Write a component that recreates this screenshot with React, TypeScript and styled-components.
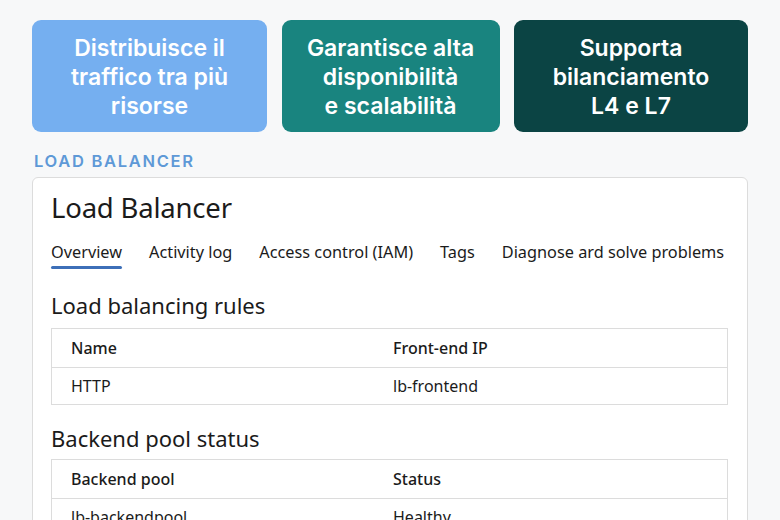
import React from "react";
import styled, { createGlobalStyle } from "styled-components";

const Global = createGlobalStyle`
  html, body { margin: 0; padding: 0; background: #f7f8f9; }
  body { font-family: "Noto Sans", "Open Sans", sans-serif; }
`;

const Page = styled.div`
  width: 780px;
  height: 520px;
  overflow: hidden;
  box-sizing: border-box;
  padding: 20px 32px 0 32px;
`;

const Cards = styled.div`
  display: grid;
  grid-template-columns: 235px 218px 234px;
  column-gap: 14.5px;
`;

const Card = styled.div<{ $bg: string }>`
  height: 112px;
  border-radius: 9px;
  background: ${(p) => p.$bg};
  color: #fff;
  display: flex;
  flex-direction: column;
  align-items: center;
  justify-content: center;
  text-align: center;
  font-family: Inter, "Noto Sans", sans-serif;
  font-weight: 600;
  font-size: 23px;
  line-height: 29px;
  padding-top: 2px;
  box-sizing: border-box;
  white-space: nowrap;
`;

const Label = styled.div`
  margin: 19px 0 0 2px;
  font-family: Inter, "Noto Sans", sans-serif;
  font-weight: 600;
  font-size: 16.5px;
  letter-spacing: 1.7px;
  color: #5e99d7;
  line-height: 20px;
`;

const Panel = styled.div`
  margin-top: 6px;
  background: #fff;
  border: 1px solid #dcdcdc;
  border-radius: 6px;
  padding: 11px 19px 20px 18px;
  height: 400px;
  box-sizing: border-box;
  color: #1b1b1b;
`;

const Title = styled.h1`
  margin: 0;
  font-weight: 400;
  font-size: 27.5px;
  line-height: 38px;
  letter-spacing: -0.2px;
`;

const Tabs = styled.div`
  display: flex;
  gap: 27px;
  margin-top: 13px;
  white-space: nowrap;
`;

const Tab = styled.div<{ $active?: boolean }>`
  flex: none;
  font-size: 16.3px;
  line-height: 24px;
  padding-bottom: 5px;
  position: relative;
  &::after {
    content: "";
    display: ${(p) => (p.$active ? "block" : "none")};
    position: absolute;
    left: 0;
    right: 0;
    bottom: 0;
    height: 3px;
    border-radius: 2px;
    background: #3d6fb8;
  }
`;

const Section = styled.h2<{ $top: number; $bottom: number }>`
  margin: ${(p) => p.$top}px 0 ${(p) => p.$bottom}px;
  font-weight: 400;
  font-size: 22px;
  line-height: 30px;
`;

const Table = styled.div`
  border: 1px solid #dcdcdc;
`;

const Row = styled.div<{ $head?: boolean }>`
  display: grid;
  grid-template-columns: 322px 1fr;
  height: ${(p) => (p.$head ? 38 : 36)}px;
  align-items: center;
  font-size: 16px;
  font-weight: ${(p) => (p.$head ? 500 : 400)};
  & + & { border-top: 1px solid #dcdcdc; }
`;

const Cell = styled.div`
  padding-left: 19px;
`;

const rules = [["HTTP", "lb-frontend"]];
const pools = [["lb-backendpool", "Healthy"]];

const cards = [
  { bg: "#75aff0", lines: ["Distribuisce il", "traffico tra più", "risorse"] },
  { bg: "#19847f", lines: ["Garantisce alta", "disponibilità", "e scalabilità"] },
  { bg: "#0b4444", lines: ["Supporta", "bilanciamento", "L4 e L7"] },
];

export default function App() {
  return (
    <>
      <Global />
      <Page>
        <Cards>
          {cards.map((c) => (
            <Card key={c.bg} $bg={c.bg}>
              {c.lines.map((l) => (
                <span key={l}>{l}</span>
              ))}
            </Card>
          ))}
        </Cards>
        <Label>LOAD BALANCER</Label>
        <Panel>
          <Title>Load Balancer</Title>
          <Tabs>
            <Tab $active>Overview</Tab>
            <Tab>Activity log</Tab>
            <Tab>Access control (IAM)</Tab>
            <Tab>Tags</Tab>
            <Tab>Diagnose ard solve problems</Tab>
          </Tabs>
          <Section $top={21} $bottom={8}>Load balancing rules</Section>
          <Table>
            <Row $head>
              <Cell>Name</Cell>
              <Cell>Front-end IP</Cell>
            </Row>
            {rules.map((r) => (
              <Row key={r[0]}>
                <Cell>{r[0]}</Cell>
                <Cell>{r[1]}</Cell>
              </Row>
            ))}
          </Table>
          <Section $top={18} $bottom={6}>Backend pool status</Section>
          <Table>
            <Row $head>
              <Cell>Backend pool</Cell>
              <Cell>Status</Cell>
            </Row>
            {pools.map((r) => (
              <Row key={r[0]}>
                <Cell>{r[0]}</Cell>
                <Cell>{r[1]}</Cell>
              </Row>
            ))}
          </Table>
        </Panel>
      </Page>
    </>
  );
}
